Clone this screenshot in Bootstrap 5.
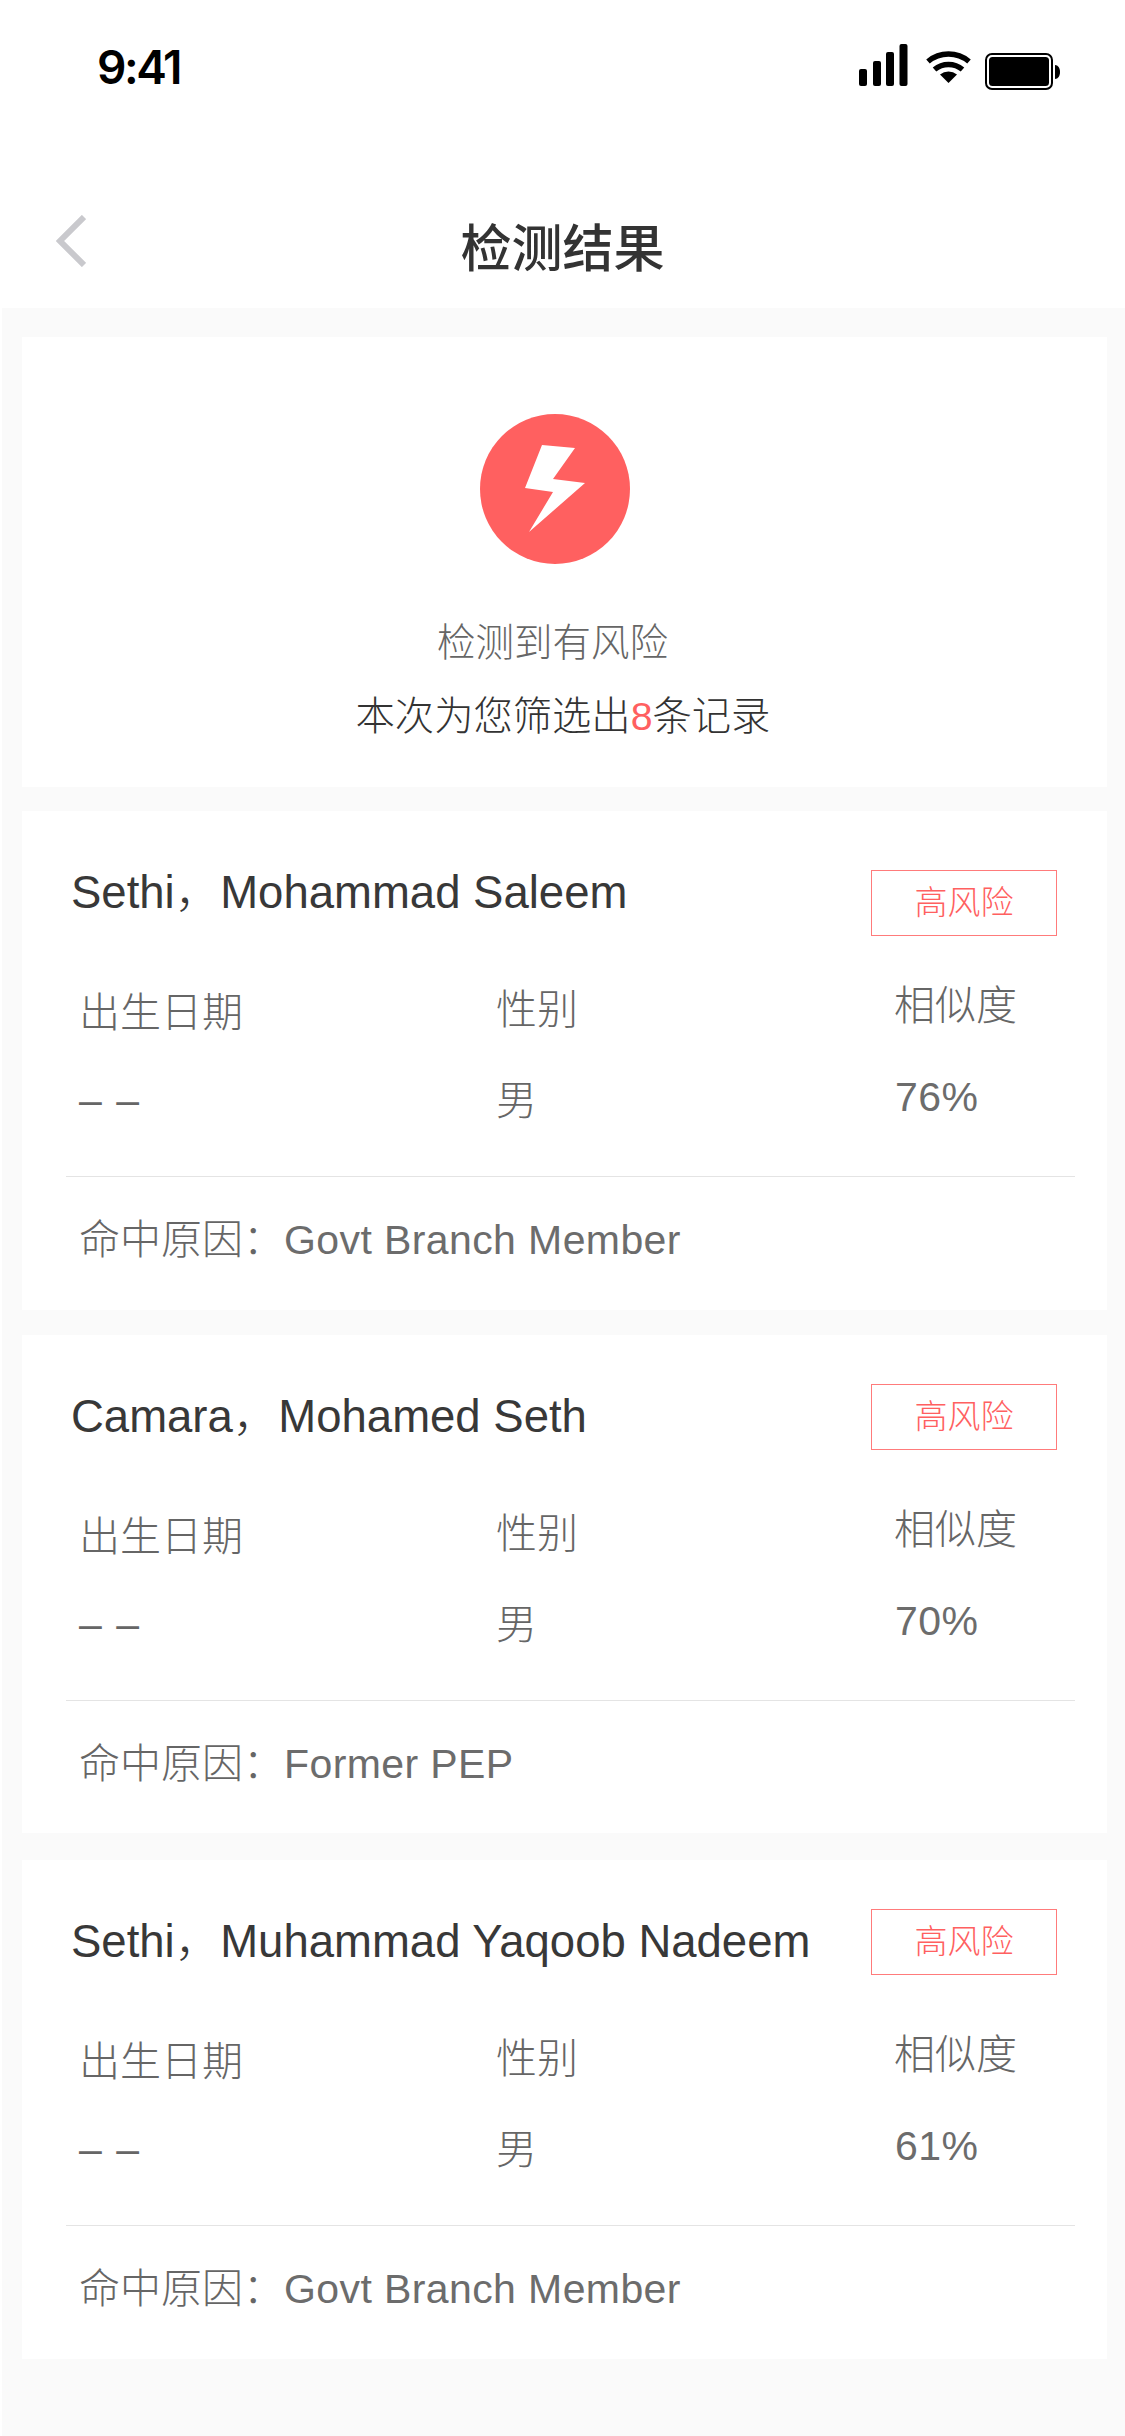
<!DOCTYPE html>
<html lang="zh">
<head>
<meta charset="utf-8">
<title>检测结果</title>
<link href="https://cdn.jsdelivr.net/npm/bootstrap@5.3.0/dist/css/bootstrap.min.css" rel="stylesheet">
<style>
html,body{margin:0;padding:0}
body{width:1125px;height:2436px;background:#fff;font-family:"Liberation Sans","Noto Sans CJK SC",sans-serif;color:#333;overflow:hidden}
.top-head{height:308px;background:#fff}
.stat-bar{height:132px;padding:0 65px 0 97px}
.clock{font-family:"Inter","Liberation Sans",sans-serif;font-weight:600;font-size:46px;line-height:1;color:#000;letter-spacing:-2.4px;padding-top:44px}
.stat-icons{padding-top:42px}
.nav-row{height:176px;padding:83px 0 0 56px}
.back-arrow{width:30px;height:52px}
.page-title{font-family:"Noto Sans CJK SC",sans-serif;font-size:51px;font-weight:500;color:#333;line-height:60px;position:absolute;left:0;right:0;text-align:center;top:215px;margin:0}
.sheet{margin-left:2px;height:2128px;background:#fafafa;padding:29px 18px 0 20px}
.hero{background:#fff;height:450px;padding-top:77px;margin-bottom:24px}
.hero-circle{width:150px;height:150px;margin-left:458px}
.hero-a{font-size:38.500px;font-weight:300;color:#666;line-height:50px;margin:54px 0 0;padding-right:24px}
.hero-b{font-size:39.300px;font-weight:300;color:#333;line-height:50px;margin-top:23px;padding-right:3px}
.hit{color:#ff6060}
.rec{background:#fff;height:499px;margin-bottom:25px;padding:0 32px 0 44px}
.rec-mid{height:498px;margin-bottom:27px}
.rec-top{height:125px}
.rec-name{font-size:45.500px;line-height:50px;color:#383838;padding:0 0 0 5px;margin:57px 0 0;font-weight:300}
.risk{width:186px;height:66px;border:1.5px solid #ff7b7b;color:#ff6060;font-size:33px;font-weight:300;line-height:63px;text-align:center;margin:49px 18px 0 0}
.risk-low{margin-top:59px}
.fields{padding-left:13px;height:241px;border-bottom:1.500px solid #e4e4e4}
.col-a{width:417px}
.col-b{width:398px}
.col-c{flex:1}
.lab,.val,.why{font-size:41px;font-weight:300;line-height:50px;color:#666}
.lat{font-size:41px;letter-spacing:.4px;color:#6c6c6c}
.dash{word-spacing:3px}
.col-a .lab{margin-top:52px}
.col-b .lab{margin-top:49px}
.col-c .lab{margin-top:45px}
.col-a .val{margin-top:37px}
.col-b .val{margin-top:41px}
.col-c .val{margin-top:41px;padding-left:1px}
.why{padding:38px 0 0 13px}
</style>
</head>
<body class="position-relative">
<header class="top-head">
  <div class="stat-bar d-flex justify-content-between align-items-start">
    <div class="clock">9:41</div>
    <div class="stat-icons">
      <svg class="d-block" width="204" height="48" viewBox="856 40 204 48" aria-hidden="true">
        <rect x="859" y="67" width="8" height="17" rx="2"/><rect x="873" y="59" width="8" height="25" rx="2"/><rect x="886" y="50" width="8" height="34" rx="2"/><rect x="899.500" y="42" width="8" height="42" rx="2"/>
        <path d="M928 59.500a32 32 0 0 1 41 0" fill="none" stroke="#000" stroke-width="5.500"/>
        <path d="M934.500 67.500a22 22 0 0 1 28 0" fill="none" stroke="#000" stroke-width="5.500"/>
        <path d="M940 72.500a14 14 0 0 1 17 0L948.500 81z"/>
        <rect x="986" y="52" width="66" height="35" rx="6" fill="none" stroke="#000" stroke-width="2"/><rect x="989" y="55" width="60" height="29" rx="3.500"/>
        <path d="M1055 63c3 0 5 3 5 7s-2 7-5 7z"/>
      </svg>
    </div>
  </div>
  <div class="nav-row d-flex align-items-start">
    <svg class="back-arrow" viewBox="0 0 30 52" aria-hidden="true"><path d="M28 2 4 26l24 24" fill="none" stroke="#c9c9cd" stroke-width="6"/></svg>
    <h1 class="page-title">检测结果</h1>
  </div>
</header>
<main class="sheet">
  <section class="hero text-center">
    <svg class="hero-circle d-block" viewBox="0 0 150 150" aria-hidden="true"><circle cx="75" cy="75" r="75" fill="#ff6060"/><polygon points="62,31 95,34 73,65 105,69 49,118 73,78 45,74" fill="#fff"/></svg>
    <div class="hero-a">检测到有风险</div>
    <div class="hero-b">本次为您筛选出<span class="hit">8</span>条记录</div>
  </section>

  <article class="rec">
    <div class="rec-top d-flex justify-content-between align-items-start"><h2 class="rec-name">Sethi，Mohammad Saleem</h2><div class="risk risk-low">高风险</div></div>
    <div class="fields d-flex">
      <div class="col-a"><div class="lab">出生日期</div><div class="val dash">– –</div></div>
      <div class="col-b"><div class="lab">性别</div><div class="val">男</div></div>
      <div class="col-c"><div class="lab">相似度</div><div class="val lat">76%</div></div>
    </div>
    <div class="why">命中原因：<span class="lat">Govt Branch Member</span></div>
  </article>

  <article class="rec rec-mid">
    <div class="rec-top d-flex justify-content-between align-items-start"><h2 class="rec-name">Camara，Mohamed Seth</h2><div class="risk">高风险</div></div>
    <div class="fields d-flex">
      <div class="col-a"><div class="lab">出生日期</div><div class="val dash">– –</div></div>
      <div class="col-b"><div class="lab">性别</div><div class="val">男</div></div>
      <div class="col-c"><div class="lab">相似度</div><div class="val lat">70%</div></div>
    </div>
    <div class="why">命中原因：<span class="lat">Former PEP</span></div>
  </article>

  <article class="rec">
    <div class="rec-top d-flex justify-content-between align-items-start"><h2 class="rec-name">Sethi，Muhammad Yaqoob Nadeem</h2><div class="risk">高风险</div></div>
    <div class="fields d-flex">
      <div class="col-a"><div class="lab">出生日期</div><div class="val dash">– –</div></div>
      <div class="col-b"><div class="lab">性别</div><div class="val">男</div></div>
      <div class="col-c"><div class="lab">相似度</div><div class="val lat">61%</div></div>
    </div>
    <div class="why">命中原因：<span class="lat">Govt Branch Member</span></div>
  </article>
</main>
</body>
</html>
